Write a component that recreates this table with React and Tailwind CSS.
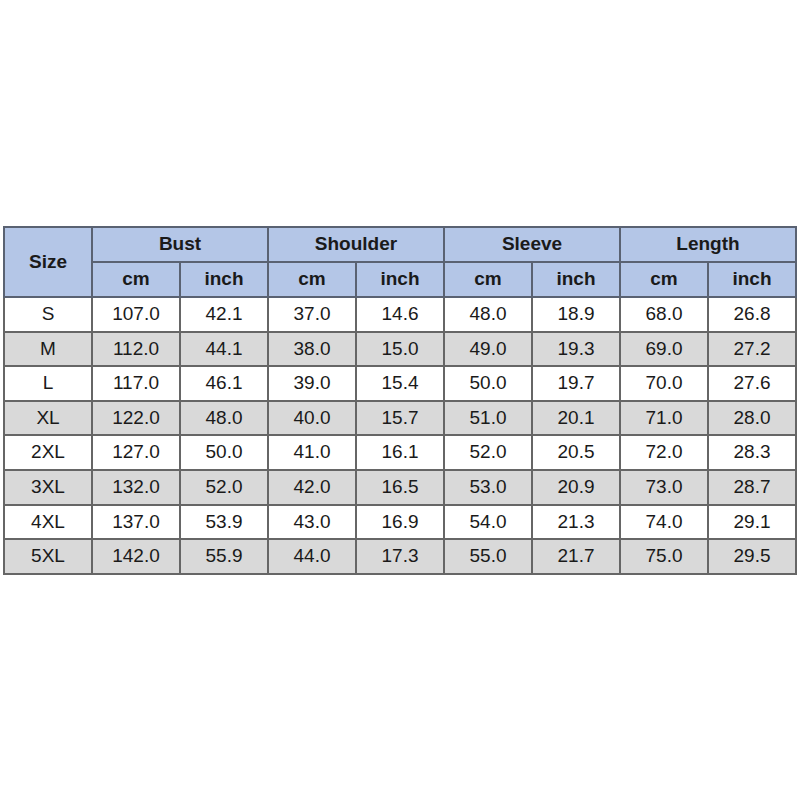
import React from 'react'

const rows = [
  ['S', '107.0', '42.1', '37.0', '14.6', '48.0', '18.9', '68.0', '26.8'],
  ['M', '112.0', '44.1', '38.0', '15.0', '49.0', '19.3', '69.0', '27.2'],
  ['L', '117.0', '46.1', '39.0', '15.4', '50.0', '19.7', '70.0', '27.6'],
  ['XL', '122.0', '48.0', '40.0', '15.7', '51.0', '20.1', '71.0', '28.0'],
  ['2XL', '127.0', '50.0', '41.0', '16.1', '52.0', '20.5', '72.0', '28.3'],
  ['3XL', '132.0', '52.0', '42.0', '16.5', '53.0', '20.9', '73.0', '28.7'],
  ['4XL', '137.0', '53.9', '43.0', '16.9', '54.0', '21.3', '74.0', '29.1'],
  ['5XL', '142.0', '55.9', '44.0', '17.3', '55.0', '21.7', '75.0', '29.5'],
]

const groups = ['Bust', 'Shoulder', 'Sleeve', 'Length']

const App = () => {
  return (
    <div className="w-[800px] h-[800px] bg-white pt-[226px] pl-[3px]" style={{ fontFamily: '"Liberation Sans", Arial, sans-serif' }}>
      <table className="table-fixed border-collapse w-[794px] text-[19px] text-[#1a1a1a]">
        <thead>
          <tr className="h-[35px] bg-[#b4c6e7]">
            <th rowSpan={2} className="border-2 border-[#5a6272] font-bold w-[88px]">Size</th>
            {groups.map((g) => (
              <th key={g} colSpan={2} className="border-2 border-[#5a6272] font-bold">{g}</th>
            ))}
          </tr>
          <tr className="h-[35px] bg-[#b4c6e7]">
            {groups.map((g) => (
              <React.Fragment key={g}>
                <th className="border-2 border-[#5a6272] font-bold">cm</th>
                <th className="border-2 border-[#5a6272] font-bold">inch</th>
              </React.Fragment>
            ))}
          </tr>
        </thead>
        <tbody>
          {rows.map((r, i) => (
            <tr key={r[0]} className={`h-[34.6px] ${i % 2 === 1 ? 'bg-[#d9d9d9]' : 'bg-white'}`}>
              {r.map((c, j) => (
                <td key={j} className="border-2 border-[#666666] text-center">{c}</td>
              ))}
            </tr>
          ))}
        </tbody>
      </table>
    </div>
  )
}

export default App
